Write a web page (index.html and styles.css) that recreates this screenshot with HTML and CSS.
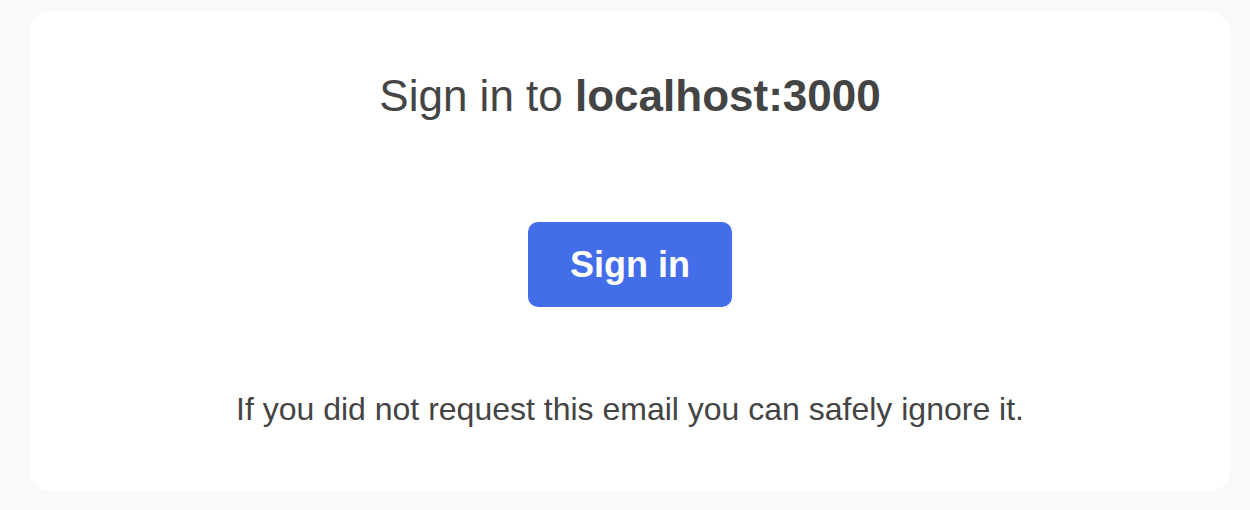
FILE: index.html
```html
<!DOCTYPE html>
<html>
<head>
<meta charset="utf-8">
<link rel="stylesheet" href="styles.css">
</head>
<body>
  <div class="card">
    <div class="title">Sign in to <strong>localhost:3000</strong></div>
    <div class="action"><a class="btn" href="#">Sign in</a></div>
    <div class="note">If you did not request this email you can safely ignore it.</div>
  </div>
</body>
</html>
```
FILE: styles.css
```css
html, body {
  margin: 0;
  background: #f9f9f9;
}
body {
  padding: 11px 0 0 30px;
  font-family: "Liberation Sans", Arial, Helvetica, sans-serif;
  color: #444;
}
.card {
  width: 1200px;
  box-sizing: border-box;
  background: #fff;
  border-radius: 20px;
  padding: 40px;
  display: flex;
  flex-direction: column;
  align-items: stretch;
  gap: 40px;
}
.title {
  text-align: center;
  padding: 20px 0;
  font-size: 44px;
  line-height: 50.6px;
}
.title strong {
  font-weight: bold;
}
.action {
  display: flex;
  justify-content: center;
  padding: 40px 0;
}
.btn {
  display: inline-block;
  font-size: 36px;
  line-height: 41.4px;
  font-weight: bold;
  color: #fff;
  text-decoration: none;
  background: #436de9;
  border: 2px solid #436de9;
  border-radius: 10px;
  padding: 20px 40px;
}
.note {
  text-align: center;
  font-size: 32px;
  line-height: 44px;
  padding-bottom: 20px;
}
```
